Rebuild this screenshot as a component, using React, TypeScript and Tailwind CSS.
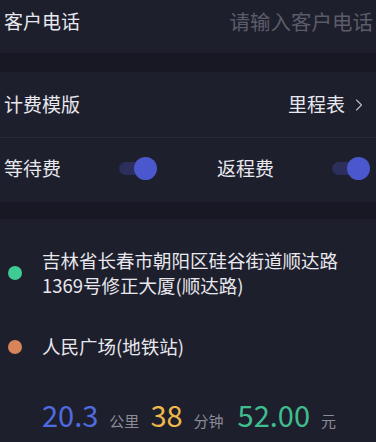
import { ChevronRight } from "lucide-react";

function Toggle() {
  return (
    <div className="relative w-[38px] h-[24px] flex items-center">
      <div className="h-[13px] w-[30px] rounded-full bg-[#2c2f5c]" />
      <div className="absolute right-0 top-px w-[23px] h-[23px] rounded-full bg-[#4b57cc]" />
    </div>
  );
}

export default function App() {
  return (
    <div
      className="w-[376px] h-[442px] overflow-hidden bg-[#1e1f2c] text-[#e8e8ee]"
      style={{ fontFamily: '"Noto Sans CJK SC", "Noto Sans", sans-serif' }}
    >
      {/* Phone */}
      <div className="h-[53px] flex items-start justify-between pl-[4px] pr-[3px] pt-[7px] text-[19px] leading-[28px]">
        <span>客户电话</span>
        <span className="text-[20.5px] text-[#5b5c69]">请输入客户电话</span>
      </div>

      <div className="h-[19px] bg-[#171824]" />

      {/* Fee settings */}
      <div className="h-[66px] flex items-center justify-between pl-[4px] pr-[7px] text-[19px] border-b border-[#2a2b39]">
        <span>计费模版</span>
        <span className="flex items-center gap-[4px]">
          里程表
          <ChevronRight className="w-[20px] h-[20px] text-[#b9bac4]" strokeWidth={1.3} />
        </span>
      </div>
      <div className="h-[64px] flex items-center pl-[4px] pr-[6px] pb-[4px] text-[19px]">
        <div className="flex items-center w-[213px]">
          <span>等待费</span>
          <div className="ml-[58px]">
            <Toggle />
          </div>
        </div>
        <div className="flex flex-1 items-center justify-between">
          <span>返程费</span>
          <Toggle />
        </div>
      </div>

      <div className="h-[17px] bg-[#171824]" />

      {/* Route */}
      <div className="pt-[29px] pl-[8px] pr-[12px]">
        <div className="flex items-center gap-[20px]">
          <div className="w-[14px] h-[14px] rounded-full bg-[#3ecb94] shrink-0" />
          <p className="text-[18.5px] leading-[25px]">
            吉林省长春市朝阳区硅谷街道顺达路
            <br />
            1369号修正大厦(顺达路)
          </p>
        </div>
        <div className="flex items-center gap-[20px] mt-[36px]">
          <div className="w-[14px] h-[14px] rounded-full bg-[#d8845a] shrink-0" />
          <p className="text-[18.5px] leading-[25px]">人民广场(地铁站)</p>
        </div>
        <div className="flex items-baseline mt-[37px] pl-[34px]">
          <span className="text-[29px] leading-[36px] text-[#4f6be0]">20.3</span>
          <span className="text-[15px] text-[#8b8c97] ml-[11px]">公里</span>
          <span className="text-[29px] leading-[36px] text-[#efb84b] ml-[11px]">38</span>
          <span className="text-[15px] text-[#8b8c97] ml-[11px]">分钟</span>
          <span className="text-[29px] leading-[36px] text-[#3fbd8e] ml-[14px]">52.00</span>
          <span className="text-[15px] text-[#8b8c97] ml-[11px]">元</span>
        </div>
      </div>
    </div>
  );
}
